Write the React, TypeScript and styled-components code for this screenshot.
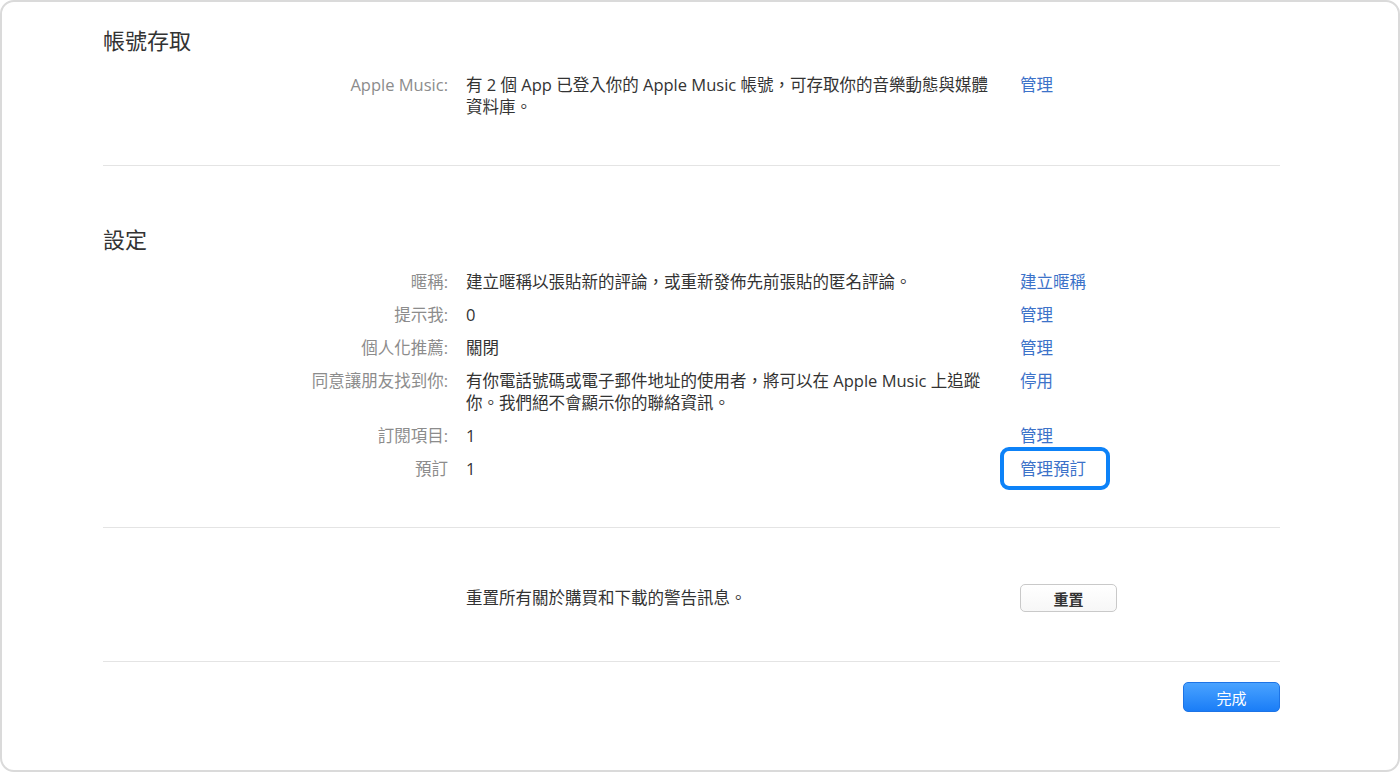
import React from "react";
import styled, { createGlobalStyle } from "styled-components";

const Global = createGlobalStyle`
  html, body { margin: 0; padding: 0; background: #ffffff; }
  body { font-family: "Open Sans", "Noto Sans CJK TC", sans-serif; }
  * { box-sizing: border-box; }
`;

const Card = styled.div`
  width: 1400px;
  height: 772px;
  border: 2px solid #dadada;
  border-radius: 14px;
  background: #fff;
  padding: 0 118px 0 101px;
  display: flex;
  flex-direction: column;
`;

const Section = styled.section<{ $top: number; $bottom: number }>`
  padding-top: ${(p) => p.$top}px;
  padding-bottom: ${(p) => p.$bottom}px;
  border-bottom: 1px solid #e4e4e4;
  display: flex;
  flex-direction: column;
`;

const Heading = styled.h2<{ $gap: number }>`
  margin: 0 0 ${(p) => p.$gap}px 0;
  font-size: 22px;
  line-height: 30px;
  font-weight: 400;
  color: #333;
`;

const Rows = styled.div`
  display: flex;
  flex-direction: column;
  gap: 11px;
`;

const Row = styled.div`
  display: grid;
  grid-template-columns: 345px 536px 1fr;
  column-gap: 18px;
  align-items: start;
  font-size: 16.5px;
  line-height: 22px;
`;

const Label = styled.div`
  text-align: right;
  color: #8c8c8c;
`;

const Value = styled.div`
  color: #333;
`;

const Action = styled.div`
  display: flex;
`;

const LinkText = styled.a`
  position: relative;
  color: #3c72c9;
  text-decoration: none;
  cursor: pointer;
`;

const Highlight = styled.span`
  position: absolute;
  left: -20px;
  right: -24px;
  top: -11px;
  bottom: -10px;
  border: 4px solid #0d82f8;
  border-radius: 9px;
  pointer-events: none;
`;

const CenterRow = styled(Row)`
  align-items: center;
`;

const ResetButton = styled.button`
  width: 97px;
  height: 28px;
  border: 1px solid #c9c9c9;
  border-radius: 5px;
  background: linear-gradient(#ffffff, #f7f7f7);
  color: #333;
  font-family: "Open Sans", "Noto Sans CJK TC", sans-serif;
  font-size: 15px;
  font-weight: 700;
  padding: 0;
`;

const Footer = styled.div`
  padding-top: 20px;
  display: flex;
  justify-content: flex-end;
`;

const DoneButton = styled.button`
  width: 97px;
  height: 30px;
  border: 1px solid #1d74e6;
  border-radius: 5px;
  background: linear-gradient(#4aa3ff, #1a7df7);
  color: #fff;
  font-family: "Open Sans", "Noto Sans CJK TC", sans-serif;
  font-size: 15px;
  padding: 0;
`;

type Item = { label: string; value: string; action: string; highlight?: boolean };

const settings: Item[] = [
  { label: "暱稱:", value: "建立暱稱以張貼新的評論，或重新發佈先前張貼的匿名評論。", action: "建立暱稱" },
  { label: "提示我:", value: "0", action: "管理" },
  { label: "個人化推薦:", value: "關閉", action: "管理" },
  {
    label: "同意讓朋友找到你:",
    value: "有你電話號碼或電子郵件地址的使用者，將可以在 Apple Music 上追蹤你。我們絕不會顯示你的聯絡資訊。",
    action: "停用",
  },
  { label: "訂閱項目:", value: "1", action: "管理" },
  { label: "預訂", value: "1", action: "管理預訂", highlight: true },
];

export default function App() {
  return (
    <>
      <Global />
      <Card>
        <Section $top={23} $bottom={47}>
          <Heading $gap={19}>帳號存取</Heading>
          <Rows>
            <Row>
              <Label>Apple Music:</Label>
              <Value>有 2 個 App 已登入你的 Apple Music 帳號，可存取你的音樂動態與媒體資料庫。</Value>
              <Action>
                <LinkText>管理</LinkText>
              </Action>
            </Row>
          </Rows>
        </Section>
        <Section $top={58} $bottom={47}>
          <Heading $gap={17}>設定</Heading>
          <Rows>
            {settings.map((s) => (
              <Row key={s.label}>
                <Label>{s.label}</Label>
                <Value>{s.value}</Value>
                <Action>
                  <LinkText>
                    {s.action}
                    {s.highlight && <Highlight />}
                  </LinkText>
                </Action>
              </Row>
            ))}
          </Rows>
        </Section>
        <Section $top={56} $bottom={49}>
          <CenterRow>
            <Label />
            <Value>重置所有關於購買和下載的警告訊息。</Value>
            <Action>
              <ResetButton>重置</ResetButton>
            </Action>
          </CenterRow>
        </Section>
        <Footer>
          <DoneButton>完成</DoneButton>
        </Footer>
      </Card>
    </>
  );
}
